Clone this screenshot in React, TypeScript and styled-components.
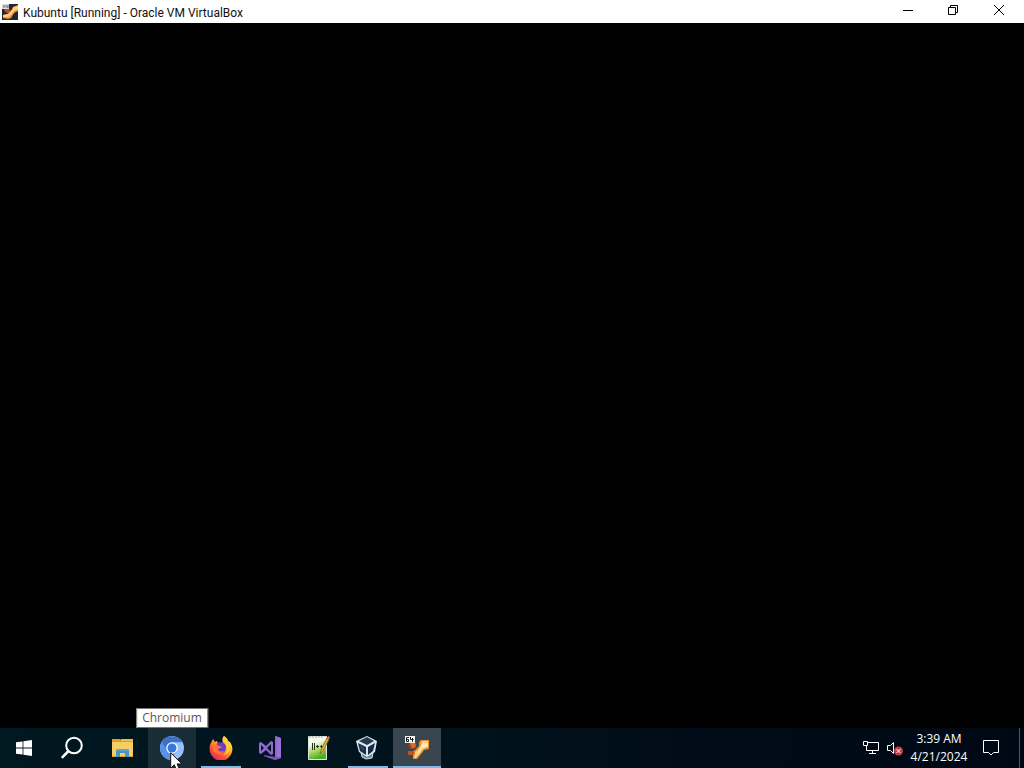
import React from "react";
import styled, { createGlobalStyle } from "styled-components";

const GlobalStyle = createGlobalStyle`
  * { box-sizing: border-box; }
  html, body { margin: 0; padding: 0; background: #000; }
  body { font-family: "Open Sans", "Noto Sans", sans-serif; font-size: 12px; }
  button { font: inherit; color: inherit; border: 0; padding: 0; background: transparent; }
  svg { display: block; flex: none; }
`;

const Desktop = styled.div`
  display: flex;
  flex-direction: column;
  height: 100vh;
  overflow: hidden;
  background: #000;
`;

const TitleBar = styled.header`
  display: flex;
  align-items: center;
  height: 23px;
  padding-left: 2px;
  gap: 5px;
  background: #fff;
  color: #111;
`;

const Title = styled.h1`
  flex: 1;
  margin: 0;
  padding-top: 2px;
  font-family: Roboto, "Open Sans", sans-serif;
  font-size: 12px;
  font-weight: 400;
  line-height: 18px;
  white-space: nowrap;
`;

const WindowButton = styled.button`
  display: flex;
  align-items: center;
  justify-content: center;
  width: 46px;
  height: 20px;
`;

const WindowControls = styled.div`
  display: flex;
  align-self: flex-start;
  padding-right: 2px;
`;

const GuestScreen = styled.main`
  flex: 1;
  background: #000;
`;

const Taskbar = styled.footer`
  display: flex;
  justify-content: space-between;
  height: 40px;
  background: linear-gradient(to right, #001821, #00131d 40%, #000a17 80%, #000815);
  color: #fff;
`;

const SystemButtons = styled.div`
  display: flex;
  margin-right: 3px;
`;

const Launchers = styled.nav`
  display: flex;
`;

const Apps = styled.div`
  display: flex;
  gap: 1px;
`;

type TaskState = "idle" | "hover" | "running" | "active";

const taskBackground: Record<TaskState, string> = {
  idle: "transparent",
  hover: "#182d36",
  running: "transparent",
  active: "#39464f",
};

const TaskButton = styled.button<{ $state?: TaskState }>`
  position: relative;
  display: flex;
  align-items: center;
  justify-content: center;
  width: 48px;
  height: 40px;
  background: ${(p) => taskBackground[p.$state ?? "idle"]};

  &::after {
    content: "";
    display: ${(p) => (p.$state === "running" || p.$state === "active" ? "block" : "none")};
    position: absolute;
    bottom: 0;
    left: ${(p) => (p.$state === "active" ? "0" : "4px")};
    right: ${(p) => (p.$state === "active" ? "0" : "4px")};
    height: 2px;
    background: #7fb9e8;
  }
`;

const Tooltip = styled.span`
  position: absolute;
  bottom: 40px;
  left: 50%;
  transform: translateX(-50%);
  padding: 0 5px;
  border: 1px solid #777;
  background: #fff;
  color: #575757;
  line-height: 18px;
  white-space: nowrap;
`;

const Pointer = styled.span`
  position: absolute;
  left: 22px;
  top: 24px;
  z-index: 1;
`;

const Tray = styled.div`
  display: flex;
  align-items: stretch;
`;

const TrayButton = styled.button`
  display: flex;
  align-items: center;
  justify-content: center;
  width: 24px;
`;

const Clock = styled.button`
  display: flex;
  flex-direction: column;
  justify-content: center;
  align-items: center;
  width: 64px;
  line-height: 18px;
  white-space: nowrap;
`;

const NotificationButton = styled(TrayButton)`
  width: 40px;
`;

const ShowDesktop = styled.button`
  width: 5px;
  margin-left: 8px;
  border-left: 1px solid #4a5662;
`;

const MachineIcon = () => (
  <svg width="24" height="24" viewBox="0 0 24 24" aria-hidden="true">
    <circle cx="7.5" cy="9" r="4" fill="#a53c12" />
    <path d="M5 7h5l1 3-2 2H7z" fill="#dc6a28" />
    <path d="M14 10V6l2-2h8v9l-5 1-2 3-5 6H8v-4H3v-4h6z" fill="#e98f2d" />
    <path d="M16 9l1-4h6v6l-5 2-3 4-4 5H9l1-4-1-1 4-3z" fill="#ffd085" />
    <path d="M18 7h5v3l-5 2-3 4-3 3 2-5z" fill="#ffe9b5" />
    <path d="M3 15h5l2 2-2 2H3z" fill="#b9551a" />
    <path d="M0 0h10v7H0z" fill="#f4f4f4" />
    <path d="M4 1.500H1.500v4h2v-2h-2M5.500 1v2.500h3M7.500 2v4" fill="none" stroke="#1d1d1d" />
  </svg>
);

const TitleIcon = () => (
  <svg width="16" height="16" viewBox="0 0 16 16" aria-hidden="true">
    <path d="M0 0h16v16H0z" fill="#242534" />
    <path d="M2 5h5l2 2-2 3-4-2z" fill="#bd4c20" />
    <path d="M1 14v-3l5-1 3-3 2-4 5-2v6l-4 2-3 5-3 1z" fill="#ef9930" />
    <path d="M1 13v-2l5-1 4-4 2-3 4-1v3l-4 2-3 4-3 2z" fill="#ffd083" />
    <path d="M0 0h7v5H0z" fill="#ddd" />
    <path d="M1 2h2M1 3h2M4 1v2h2M6 1v3" fill="none" stroke="#777" />
  </svg>
);

const WindowsIcon = () => (
  <svg width="16" height="16" viewBox="0 0 16 16" fill="#fff" aria-hidden="true">
    <path d="M0 2.3l6.6-.9v6.1H0zM7.4 1.3L16 0v7.5H7.4zM0 8.4h6.6v6.2L0 13.7zM7.4 8.4H16V16l-8.6-1.3z" />
  </svg>
);

const SearchIcon = () => (
  <svg width="24" height="24" viewBox="0 0 24 24" fill="none" stroke="#fff" aria-hidden="true">
    <circle cx="14" cy="9.5" r="7.8" strokeWidth="2" />
    <path d="M8.5 15L1.8 21.8" strokeWidth="2.5" />
  </svg>
);

const ExplorerIcon = () => (
  <svg width="24" height="24" viewBox="0 0 24 24" aria-hidden="true">
    <path d="M1 3h8l2 2h11v16H1z" fill="#d9a22d" />
    <path d="M10 3h12v2H10z" fill="#efbd45" />
    <path d="M1 6h21v14H1z" fill="#f5cd62" />
    <path d="M5 21v-7l2-1h9l2 1v7h-4v-4H9v4z" fill="#4296c8" />
    <path d="M5 15v-1l2-1h9l2 1v1z" fill="#5da5cb" />
  </svg>
);

const ChromiumIcon = () => (
  <svg width="24" height="24" viewBox="0 0 24 24" aria-hidden="true">
    <circle cx="12" cy="12" r="12" fill="#98c0fb" />
    <path d="M1.6 6A12 12 0 0 0 10.5 23.9L16.8 15 7 14z" fill="#5a90ed" />
    <path d="M1.6 6A12 12 0 0 1 22.4 6.3H12L7 14.5z" fill="#3c70c9" />
    <circle cx="12" cy="12" r="5.8" fill="#fff" />
    <circle cx="12" cy="12" r="4.5" fill="#3478dc" />
  </svg>
);

const FirefoxIcon = () => (
  <svg width="24" height="24" viewBox="0 0 24 24" aria-hidden="true">
    <defs>
      <linearGradient id="flame" x1="0.85" y1="0" x2="0.2" y2="1">
        <stop offset="0" stopColor="#fff052" />
        <stop offset="0.4" stopColor="#ffb32c" />
        <stop offset="0.7" stopColor="#ff5130" />
        <stop offset="1" stopColor="#e52166" />
      </linearGradient>
    </defs>
    <path d="M15 0c2 1 4 3 4 5l2 1c2 3 3 6 2 10a11.3 11.3 0 0 1-22 0C0 11 1 8 3 5l1-2 2 3 2-1 1 2h5c-1-3-1-5 1-7z" fill="url(#flame)" />
    <path d="M8 7c5-2 9 0 9 4 0 4-2 6-5 6s-6-2-5-5z" fill="#6c3fc0" />
    <path d="M4 10c2-2 4-2 6 0l3 1c0 1-3 1-4 2 0 2 2 3 6 2-2 4-10 4-11-1z" fill="#ff7433" />
    <path d="M15 0c-2 4 0 6 2 9 2 4 1 8-3 10 5 0 7-4 7-8 0-5-4-6-6-11z" fill="#ffce40" />
  </svg>
);

const VisualStudioIcon = () => (
  <svg width="24" height="24" viewBox="0 0 24 24" aria-hidden="true">
    <path d="M17 0l6 2v20l-6 2L6 20l11 1z" fill="#9265d0" />
    <path d="M17 0l6 2v20l-4 1V2z" fill="#9b70d5" />
    <path d="M17 21L6 19v1l11 4 6-2v-1z" fill="#7950b8" />
    <path fillRule="evenodd" d="M1 7l2-1 5 4 5-5 2 1v12l-2 1-5-5-5 4-2-1zM3 9v6l3-3zM13 8l-4 4 4 4z" fill="#9468d2" />
  </svg>
);

const NotepadIcon = () => (
  <svg width="24" height="24" viewBox="0 0 24 24" aria-hidden="true">
    <defs>
      <linearGradient id="page" x1="0" y1="0" x2="0.3" y2="1">
        <stop offset="0.35" stopColor="#f4faeb" />
        <stop offset="0.65" stopColor="#b2dc61" />
        <stop offset="1" stopColor="#4ead28" />
      </linearGradient>
    </defs>
    <path d="M1.500 .5h18v23h-18z" fill="url(#page)" stroke="#e2e7e0" />
    <path d="M3 0v2M6 0v2M9 0v2M12 0v2M15 0v2" stroke="#a4aca5" />
    <path d="M5.500 7v7M7.500 7v7M9 10.500h3M10.500 9v3M13 10.500h3M14.500 9v3" stroke="#203524" />
    <path d="M20 2l2 1-6 12-3 3 1-4z" fill="#edbc3e" stroke="#91712b" />
    <path d="M20 2l2 1 1-2-2-1z" fill="#d97c57" />
  </svg>
);

const VirtualBoxIcon = () => (
  <svg width="24" height="24" viewBox="1 0 24 24" aria-hidden="true">
    <path d="M6 17l1 4 4 2 6-1 1-5-6-2z" fill="#74859e" stroke="#d3deeb" />
    <path d="M1 5l11-5 10 5-2 11-8 5-8-5z" fill="#dce6f3" />
    <path d="M4 5l8-4 7 4-7 4z" fill="#25394f" />
    <path d="M3 7l8 4v8l-6-4z" fill="#162d46" />
    <path d="M13 11l7-4-2 8-5 4z" fill="#162d46" />
    <path d="M5 9l4 3v3l-3-2z" fill="#2e4663" />
  </svg>
);

const CursorIcon = () => (
  <svg width="14" height="20" viewBox="0 0 14 20" aria-hidden="true">
    <path d="M.7.8v15.4l3.6-3.4 2.4 5.8 2.8-1.2-2.4-5.5h4.8z" fill="#fff" stroke="#111" />
  </svg>
);

const apps: { name: string; state: TaskState; icon: React.ReactNode }[] = [
  { name: "File Explorer", state: "idle", icon: <ExplorerIcon /> },
  { name: "Chromium", state: "hover", icon: <ChromiumIcon /> },
  { name: "Firefox", state: "running", icon: <FirefoxIcon /> },
  { name: "Visual Studio", state: "idle", icon: <VisualStudioIcon /> },
  { name: "Notepad++", state: "idle", icon: <NotepadIcon /> },
  { name: "Oracle VM VirtualBox", state: "running", icon: <VirtualBoxIcon /> },
  { name: "Kubuntu", state: "active", icon: <MachineIcon /> },
];

export default function App() {
  return (
    <Desktop>
      <GlobalStyle />
      <TitleBar>
        <TitleIcon />
        <Title>Kubuntu [Running] - Oracle VM VirtualBox</Title>
        <WindowControls>
          <WindowButton aria-label="Minimize">
            <svg width="12" height="10" stroke="#000"><path d="M2 5.5h10" /></svg>
          </WindowButton>
          <WindowButton aria-label="Restore">
            <svg width="10" height="10" fill="none" stroke="#000"><path d="M.5 2.5h7v7h-7zM2.5 2.5v-2h7v7h-2" /></svg>
          </WindowButton>
          <WindowButton aria-label="Close">
            <svg width="10" height="10" stroke="#000"><path d="M0 0l10 10M10 0L0 10" /></svg>
          </WindowButton>
        </WindowControls>
      </TitleBar>
      <GuestScreen />
      <Taskbar>
        <Launchers>
          <SystemButtons>
            <TaskButton aria-label="Start"><WindowsIcon /></TaskButton>
            <TaskButton aria-label="Search"><SearchIcon /></TaskButton>
          </SystemButtons>
          <Apps>
            {apps.map(({ name, state, icon }) => (
              <TaskButton key={name} aria-label={name} $state={state}>
                {icon}
                {state === "hover" && (
                  <>
                    <Tooltip role="tooltip">{name}</Tooltip>
                    <Pointer><CursorIcon /></Pointer>
                  </>
                )}
              </TaskButton>
            ))}
          </Apps>
        </Launchers>
        <Tray>
          <TrayButton aria-label="Network">
            <svg width="16" height="16" viewBox="0 0 16 16" fill="none" stroke="#fff">
              <path d="M5 2.5h10.5v8h-12V6M.5 1.5h4v4h-4zM9.5 10.5v3M6 13.5h7" />
            </svg>
          </TrayButton>
          <TrayButton aria-label="Volume">
            <svg width="18" height="16" viewBox="0 0 18 16">
              <path d="M1.5 5.5h3l3-3v11l-3-3h-3z" fill="none" stroke="#fff" />
              <circle cx="12.5" cy="11" r="4.5" fill="#c43d43" />
              <path d="M10.5 9l4 4M14.5 9l-4 4" stroke="#fff" />
            </svg>
          </TrayButton>
          <Clock>
            <span>3:39 AM</span>
            <span>4/21/2024</span>
          </Clock>
          <NotificationButton aria-label="Notifications">
            <svg width="16" height="16" viewBox="0 0 16 16" fill="none" stroke="#fff">
              <path d="M.5.5h15v12h-5L8 15l-2.5-2.5h-5z" />
            </svg>
          </NotificationButton>
          <ShowDesktop aria-label="Show desktop" />
        </Tray>
      </Taskbar>
    </Desktop>
  );
}
